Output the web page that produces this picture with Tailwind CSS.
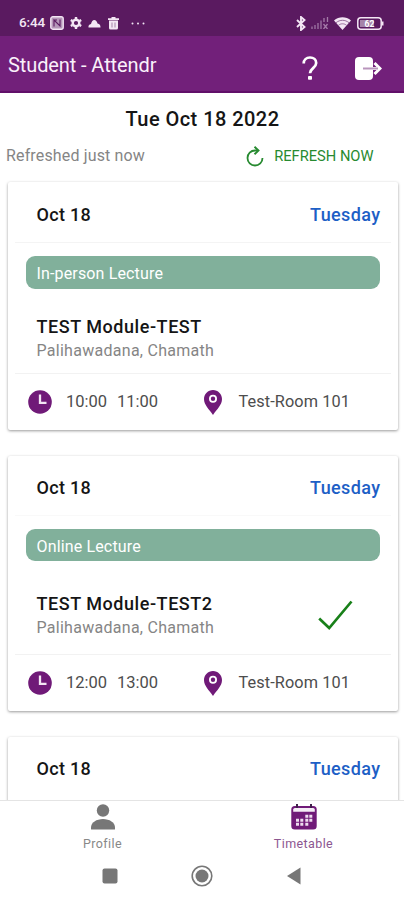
<!DOCTYPE html>
<html lang="en">
<head>
<meta charset="utf-8">
<title>Student - Attendr</title>
<script src="https://cdn.jsdelivr.net/npm/@tailwindcss/browser@4"></script>
</head>
<body class="w-[404px] h-[900px] overflow-hidden bg-white font-[Roboto,sans-serif] text-[#151515] flex flex-col whitespace-nowrap">
<svg class="hidden">
  <symbol id="clock" viewBox="0 0 24 24"><circle cx="12" cy="12" r="11.800" fill="#701a78"/><path d="M12 4.500v8.300h6.500" fill="none" stroke="#f3e6f4" stroke-width="2.300"/></symbol>
  <symbol id="pin" viewBox="0 0 18 25"><path d="M9 0C4 0 0 4 0 9c0 6 5 10 9 16 4-6 9-10 9-16 0-5-4-9-9-9z" fill="#701a78"/><circle cx="9" cy="8.800" r="3.100" fill="#701a78" stroke="#fff" stroke-width="1.800"/></symbol>
</svg>

<header class="shrink-0">
  <div class="h-9 bg-[#5a1a60] flex items-center pl-[19px] pr-5 pt-[10px] text-[#f3e6f4]">
    <span class="text-[13.500px] font-medium leading-none w-[31px] tracking-[-0.1px]">6:44</span>
    <svg class="w-[14px] h-[14px]" viewBox="0 0 14 14"><rect x=".8" y=".8" width="12.400" height="12.400" rx="2" fill="#b596b9" stroke="#f3e6f4" stroke-width="1.400"/><path d="M4 10.500V4l6 6V3.500M4 4h3" fill="none" stroke="#5a1a60" stroke-width="1.100"/></svg>
    <svg class="w-3 h-3 ml-[6px]" viewBox="0 0 12 12"><circle cx="6" cy="6" r="3.300" fill="none" stroke="currentColor" stroke-width="2.400"/><path d="M6 0v2M6 10v2M.8 3l1.700 1M9.500 8l1.700 1M.8 9l1.700-1M9.500 4l1.700-1" stroke="currentColor" stroke-width="2.400"/></svg>
    <svg class="w-[13px] h-[9px] ml-[6px]" viewBox="0 0 13 9"><path d="M.5 8.500Q0 5.500 3 5 4 1 6.300 1T9.500 4.500Q12.700 5 12.500 8.500z" fill="currentColor"/></svg>
    <svg class="w-[11px] h-[13px] ml-[7px]" viewBox="0 0 11 13"><path d="M3.500 0h4v1.200H11V3H0V1.200h3.500zM1 3.600h9V11q0 1.500-1.500 1.500h-6Q1 12.500 1 11z" fill="currentColor"/><path d="M4 5.500v5M7 5.500v5" stroke="#a483a8" stroke-width="1"/></svg>
    <svg class="w-[14px] h-[3px] ml-3" viewBox="0 0 14 3"><g fill="currentColor"><circle cx="1.500" cy="1.500" r="1"/><circle cx="7" cy="1.500" r="1"/><circle cx="12.500" cy="1.500" r="1"/></g></svg>
    <svg class="w-[10px] h-[15px] ml-auto" viewBox="0 0 10 15"><path d="M1 4l7.500 7L5 14V1l3.500 3L1 11" fill="none" stroke="currentColor" stroke-width="1.900"/></svg>
    <svg class="w-[18px] h-[12px] ml-[5px]" viewBox="0 0 18 12"><path d="M1 9.500V12M4 8v4M7 6v6M10 3.500V12" stroke="#9a70a0" stroke-width="1.400"/><path d="M13 1v4M16.500 0v5M12.500 7l4 5M16.500 7l-4 5" stroke="#a47aa8" stroke-width="1.300"/></svg>
    <svg class="w-[17px] h-[13px] ml-[5px]" viewBox="0 0 17 13"><path d="M8.500 13L0 3.500C5-.8 12-.8 17 3.500z" fill="currentColor"/><path d="M2 5.700c4-3.200 9-3.200 13 0M4.400 8.300c2.500-2 5.700-2 8.200 0" fill="none" stroke="#8b5f90" stroke-width=".9"/></svg>
    <svg class="w-[27px] h-[13px] ml-[6px]" viewBox="0 0 27 13"><rect x=".8" y=".8" width="23.400" height="11.400" rx="3" fill="none" stroke="currentColor" stroke-width="1.500"/><rect x="3" y="3" width="14" height="7" fill="#a583a9"/><path d="M25.500 4.500v4" stroke="currentColor" stroke-width="2"/><text x="7.500" y="9.700" font-size="8.500" font-weight="700" fill="#fff">62</text></svg>
  </div>
  <div class="h-[57px] bg-[#72207a] border-b-2 border-[#610f69] flex items-center pl-2 pr-[22px] text-white">
    <h1 class="text-[20px] leading-6 tracking-[-0.1px] pt-[3px] text-[#faf0fb]">Student - Attendr</h1>
    <svg class="w-4 h-6 ml-auto mt-[9px]" viewBox="0 0 16 24"><path d="M1.700 7.500C1.700 3.800 4.300 1.500 8 1.500s6.200 2.200 6.200 5.500c0 5-6.200 5.300-6.200 10.300" fill="none" stroke="#fff" stroke-width="2.700"/><rect x="6" y="20" width="4" height="3.700" rx=".8" fill="#fff"/></svg>
    <svg class="w-[27px] h-[23px] ml-[37px] mt-[10px]" viewBox="0 0 27 23"><rect x="0" y="0" width="18" height="23" rx="4" fill="#fff"/><path d="M18 11.500h6.500M19.500 6l5.500 5.500-5.500 5.500" fill="none" stroke="#fff" stroke-width="3"/><path d="M8 11.500h15" stroke="#b995bc" stroke-width="2"/></svg>
  </div>
</header>

<main class="h-[707px] shrink-0 overflow-hidden flex flex-col bg-white">
  <h2 class="mt-[13px] h-[25px] shrink-0 pl-px text-center text-[20px] leading-[26px] font-medium tracking-[0.45px]">Tue Oct 18 2022</h2>
  <div class="h-[51px] shrink-0 flex items-center pl-[6px] pr-[30.500px] pb-px">
    <span class="text-[16px] text-[#858585] tracking-[0.15px]">Refreshed just now</span>
    <svg class="w-[18px] h-[21px] ml-auto" viewBox="0 0 18 21"><path d="M11.500 4.500H9A7.500 7.500 0 1 0 16.500 12" fill="none" stroke="#278a30" stroke-width="1.800"/><path d="M8.500 .8l4 3.700-4 3.800" fill="none" stroke="#278a30" stroke-width="1.900"/></svg>
    <span class="ml-[10px] text-[14.700px] text-[#278a30]">REFRESH NOW</span>
  </div>

  <article class="ml-2 mr-[6px] h-[248px] shrink-0 rounded-[2px] bg-white shadow-[0_1px_3px_rgba(0,0,0,0.4)] flex flex-col">
    <div class="h-[61px] mx-[7px] pl-[21.500px] pr-[10.500px] pt-[4px] border-b border-[#f4f4f4] flex items-center justify-between text-[18px] font-medium"><span class="tracking-[0.3px]">Oct 18</span><span class="text-[#1d5fc6] tracking-[0.4px]">Tuesday</span></div>
    <div class="mt-[13px] ml-[18px] mr-[18px] h-[33px] rounded-[9px] bg-[#81b09b] pl-[10.500px] leading-[35px] text-[16px] text-white tracking-[0.15px]">In-person Lecture</div>
    <div class="mt-[26px] px-[28.500px] flex items-center">
      <div><h3 class="text-[18px] leading-6 font-medium tracking-[0.55px]">TEST Module-TEST</h3><p class="text-[16px] leading-[23px] text-[#858585] tracking-[0.28px]">Palihawadana, Chamath</p></div>
    </div>
    <div class="mt-auto h-[57px] mx-[7px] pl-[12.500px] border-t border-[#f2f2f2] flex items-center text-[16.500px] text-[#4d4d4d]">
      <svg class="w-6 h-6 -mt-px"><use href="#clock"/></svg><span class="ml-[14.500px] w-[51px]">10:00</span><span class="w-[86.500px]">11:00</span><svg class="w-[18px] h-[25px]"><use href="#pin"/></svg><span class="ml-[17px] text-[16.300px] tracking-[0.1px]">Test-Room 101</span>
    </div>
  </article>

  <article class="mt-[26px] ml-2 mr-[6px] h-[255px] shrink-0 rounded-[2px] bg-white shadow-[0_1px_3px_rgba(0,0,0,0.4)] flex flex-col">
    <div class="h-[60px] mx-[7px] pl-[21.500px] pr-[10.500px] pt-[3px] border-b border-[#f9f9f9] flex items-center justify-between text-[18px] font-medium"><span class="tracking-[0.3px]">Oct 18</span><span class="text-[#1d5fc6] tracking-[0.4px]">Tuesday</span></div>
    <div class="mt-[13px] ml-[18px] mr-[18px] h-[32px] rounded-[9px] bg-[#81b09b] pl-[10.500px] leading-[35px] text-[16px] text-white tracking-[0.15px]">Online Lecture</div>
    <div class="mt-[31px] pl-[28.500px] pr-[45px] flex items-center justify-between">
      <div><h3 class="text-[18px] leading-6 font-medium tracking-[0.55px]">TEST Module-TEST2</h3><p class="text-[16px] leading-[24px] text-[#858585] tracking-[0.28px]">Palihawadana, Chamath</p></div>
      <svg class="w-[35px] h-[30px] -mt-[3px]" viewBox="0 0 35 30"><path d="M1.200 18.500l10 9.500L33.500 1.500" fill="none" stroke="#188019" stroke-width="2.700"/></svg>
    </div>
    <div class="mt-auto h-[57px] mx-[7px] pl-[12.500px] border-t border-[#f2f2f2] flex items-center text-[16.500px] text-[#4d4d4d]">
      <svg class="w-6 h-6 -mt-px"><use href="#clock"/></svg><span class="ml-[14.500px] w-[51px]">12:00</span><span class="w-[86.500px]">13:00</span><svg class="w-[18px] h-[25px]"><use href="#pin"/></svg><span class="ml-[17px] text-[16.300px] tracking-[0.1px]">Test-Room 101</span>
    </div>
  </article>

  <article class="mt-[26px] ml-2 mr-[6px] h-[255px] shrink-0 rounded-[2px] bg-white shadow-[0_1px_3px_rgba(0,0,0,0.4)]">
    <div class="h-[60px] mx-[7px] pl-[21.500px] pr-[10.500px] pt-[3px] flex items-center justify-between text-[18px] font-medium"><span class="tracking-[0.3px]">Oct 18</span><span class="text-[#1d5fc6] tracking-[0.4px]">Tuesday</span></div>
  </article>
</main>

<footer class="h-[100px] shrink-0 border-t border-[#e4e4e4] bg-white">
  <nav class="grid grid-cols-2 h-[52px] pt-[3px] pl-[2px] text-[12.500px] leading-[16px]">
    <div class="flex flex-col items-center text-[#888] tracking-[0.4px]">
      <svg class="w-6 h-[26px]" viewBox="0 0 24 26"><g fill="#777"><circle cx="12" cy="6.500" r="6.200"/><path d="M0.500 25.500Q0 25.500 0 25v-1.500C0 18.500 5.500 15 12 15s12 3.500 12 8.500V25q0 .5-.5.500z"/></g></svg>
      <span class="mt-[6px]">Profile</span>
    </div>
    <div class="flex flex-col items-center text-[#8c5690] tracking-[0.4px]">
      <svg class="w-[26px] h-[26px]" viewBox="0 0 26 26"><rect x=".3" y="2" width="25.400" height="23.500" rx="3.500" fill="#701a78"/><path d="M2.200 7.700V5.500q0-1.600 1.600-1.600h18.400q1.600 0 1.600 1.600v2.200z" fill="#f5edf6"/><path d="M6 0v4M20 0v4" stroke="#40204a" stroke-width="2"/><path d="M14.300 10.700h3v3h-3zM18.300 10.700h3v3h-3zM5 14.700h3v3H5zM9.300 14.700h3v3h-3zM14.300 14.700h3v3h-3zM18.300 14.700h3v3h-3zM5 18.700h3v3H5zM9.300 18.700h3v3h-3zM14.300 18.700h3v3h-3z" fill="#eddcef"/></svg>
      <span class="mt-[6px]">Timetable</span>
    </div>
  </nav>
  <div class="h-[46px] flex items-center pl-[102px]">
    <svg class="w-[16px] h-[16px]" viewBox="0 0 16 16"><rect x=".5" y=".5" width="15" height="15" rx="2" fill="#777"/></svg>
    <svg class="w-[22px] h-[22px] ml-[73px]" viewBox="0 0 22 22"><circle cx="11" cy="11" r="9.800" fill="none" stroke="#777" stroke-width="1.600"/><circle cx="11" cy="11" r="6.500" fill="#777"/></svg>
    <svg class="w-[14px] h-[18px] ml-[74px]" viewBox="0 0 14 18"><path d="M0 9L13.500.5v17z" fill="#777"/></svg>
  </div>
</footer>
</body>
</html>
